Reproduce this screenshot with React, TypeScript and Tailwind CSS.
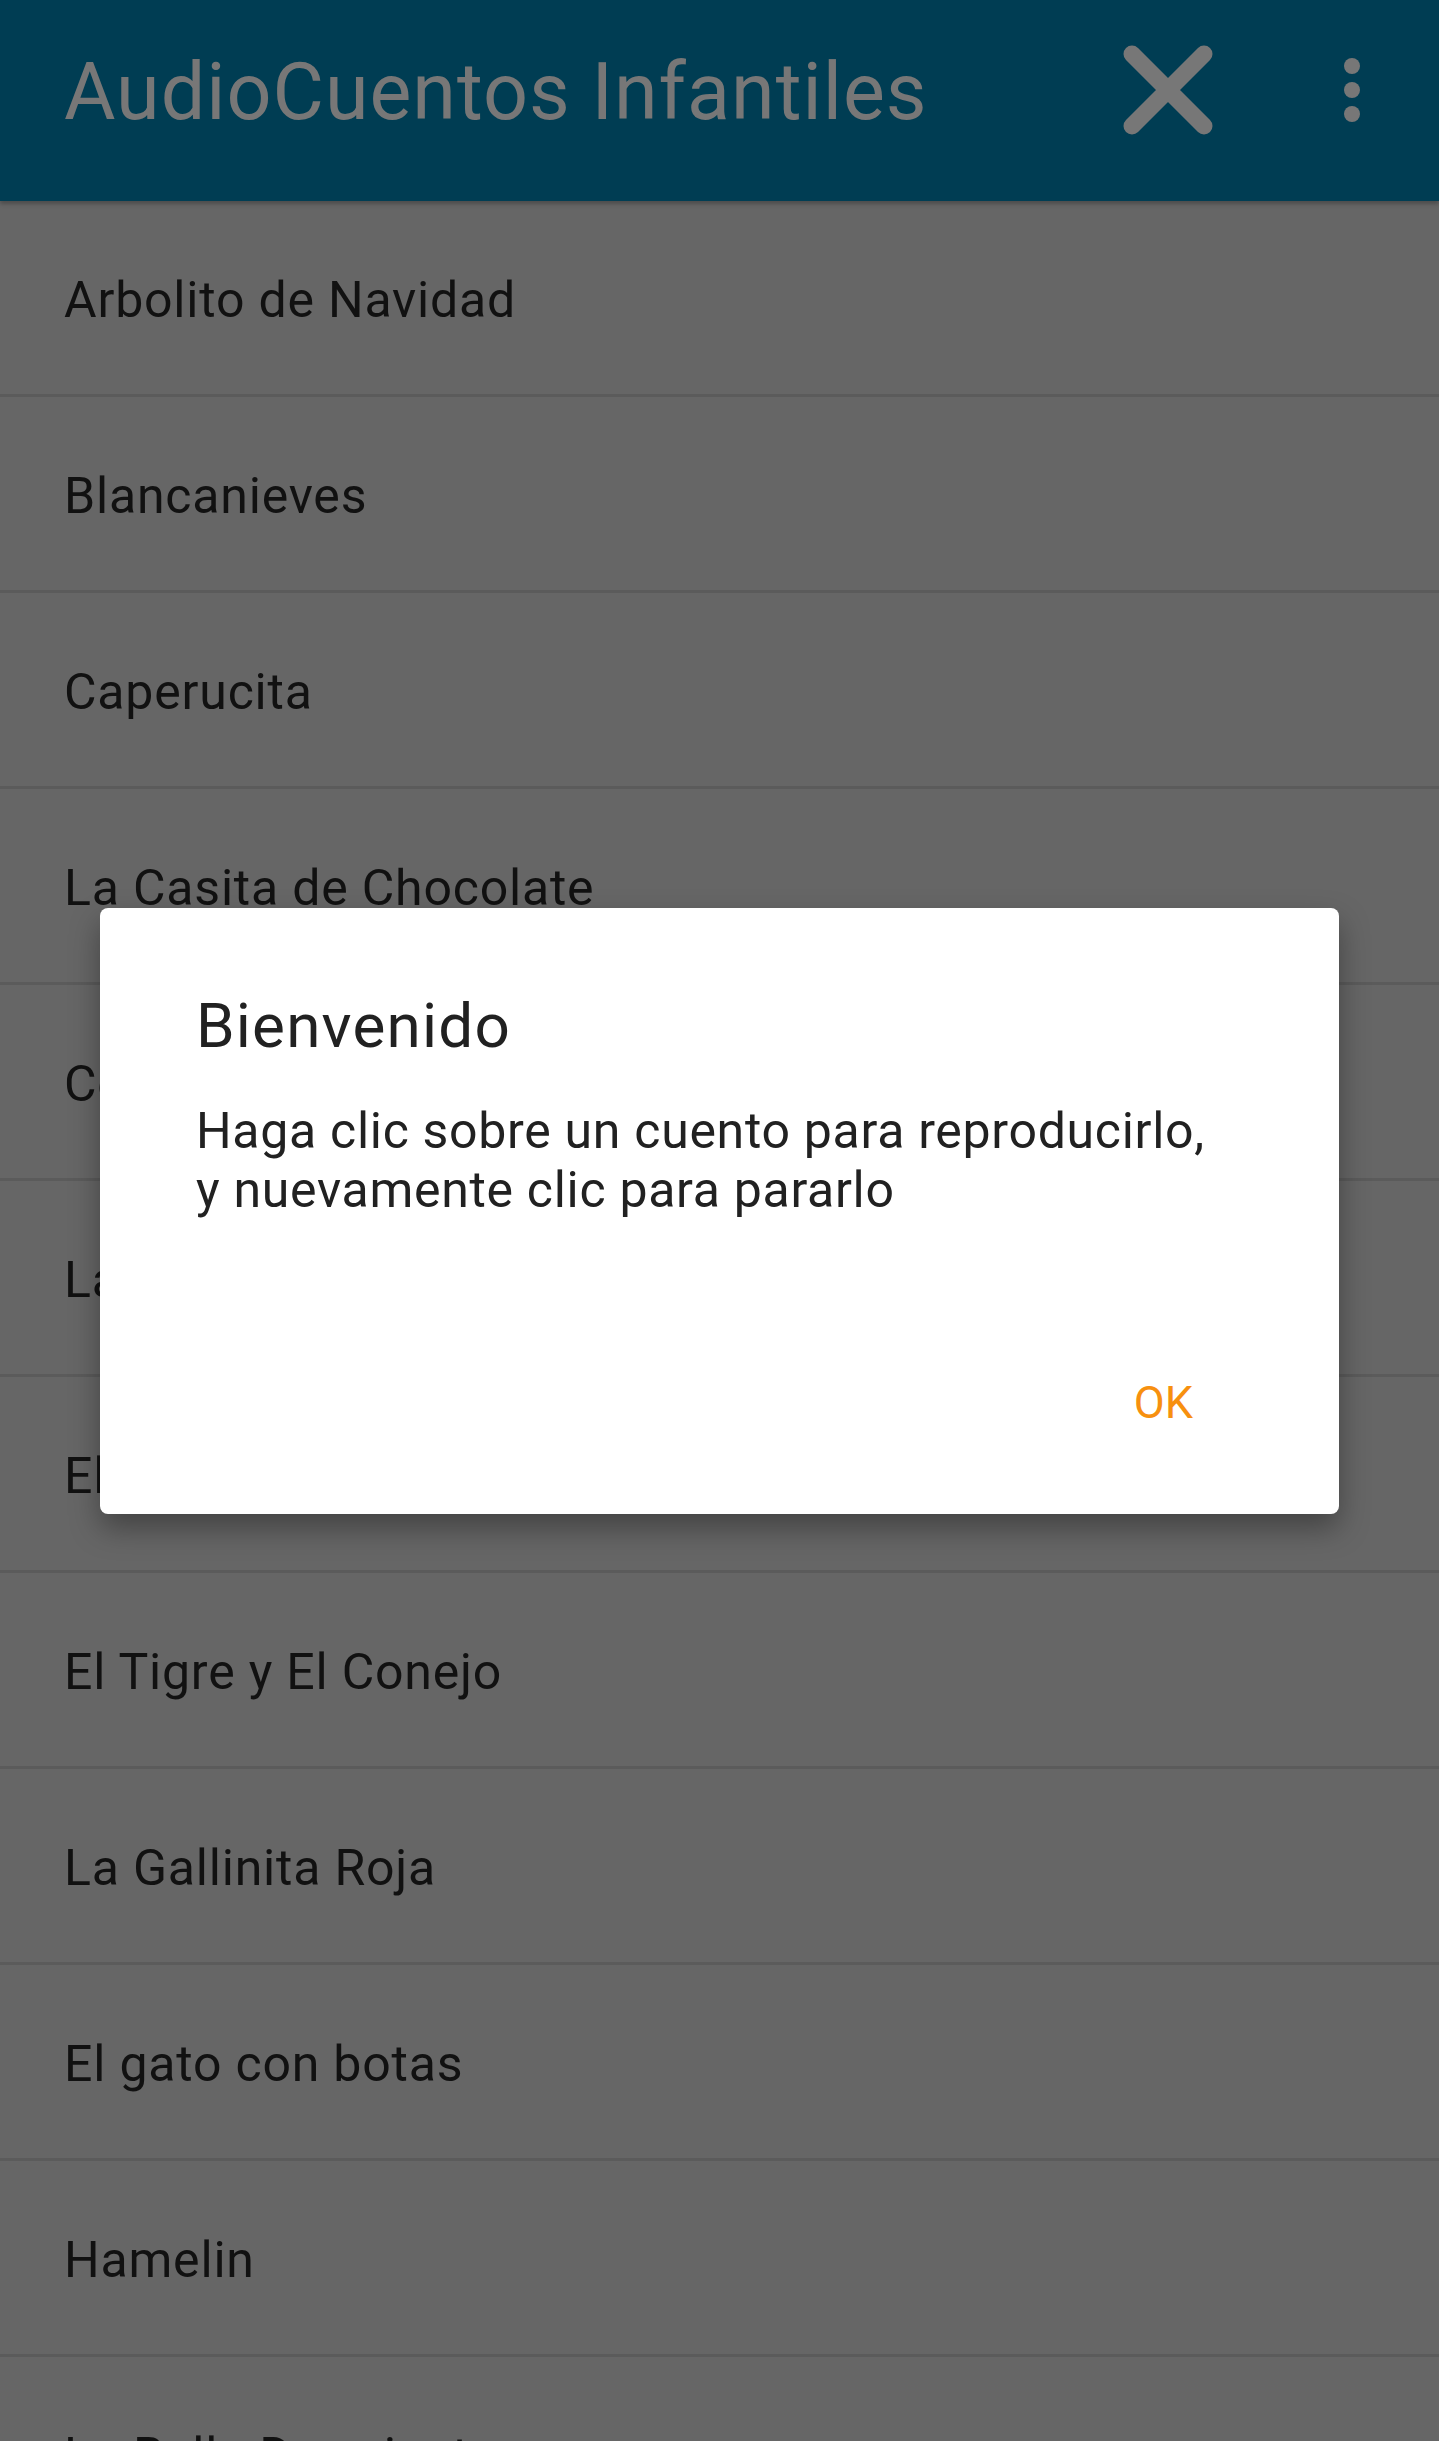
import React from "react";

const cuentos = [
	"Arbolito de Navidad",
	"Blancanieves",
	"Caperucita",
	"La Casita de Chocolate",
	"Cenicienta",
	"La Ratita Presumida",
	"El Patito Feo",
	"El Tigre y El Conejo",
	"La Gallinita Roja",
	"El gato con botas",
	"Hamelin",
	"La Bella Durmiente",
];

const font = { fontFamily: "Roboto, 'Noto Sans', sans-serif" };

const CloseIcon: React.FC = () => (
	<svg width="90" height="90" viewBox="0 0 90 90" className="shrink-0">
		<path d="M9 9 L81 81 M81 9 L9 81" stroke="#777777" strokeWidth="17" strokeLinecap="round" fill="none" />
	</svg>
);

const MenuDots: React.FC = () => (
	<div className="flex flex-col gap-[8px] shrink-0">
		<div className="w-[16px] h-[16px] rounded-full bg-[#777777]"></div>
		<div className="w-[16px] h-[16px] rounded-full bg-[#777777]"></div>
		<div className="w-[16px] h-[16px] rounded-full bg-[#777777]"></div>
	</div>
);

const App: React.FC = () => {
	return (
		<div className="relative w-[1439px] h-[2441px] overflow-hidden bg-[#666666]" style={font}>
			{/* HEADER */}
			<header className="relative z-10 h-[201px] bg-[#003d53] flex items-center pl-[64px] pr-[79px] pb-[22px] shadow-[0_3px_4px_rgba(0,0,0,0.25)]">
				<h1 className="flex-1 mt-[6px] text-[79px] leading-none text-[#777777] tracking-[1px] font-normal">
					AudioCuentos Infantiles
				</h1>
				<CloseIcon />
				<div className="ml-[131px]">
					<MenuDots />
				</div>
			</header>

			{/* LIST */}
			<ul>
				{cuentos.map((c) => (
					<li
						key={c}
						className="h-[196px] border-b-[3px] border-[#5b5b5b] flex items-center pl-[64px] pt-[4px] text-[50px] leading-none text-[#111111] tracking-[0.8px]"
					>
						{c}
					</li>
				))}
			</ul>

			{/* DIALOG */}
			<div className="absolute left-[100px] top-[908px] w-[1239px] h-[606px] bg-white rounded-[8px] shadow-[0_14px_30px_rgba(0,0,0,0.35)] flex flex-col">
				<h2 className="pt-[88px] pl-[96px] text-[62px] leading-[60px] text-[#212121] font-normal tracking-[1.2px]">
					Bienvenido
				</h2>
				<p className="mt-[46px] pl-[96px] pr-[40px] text-[50px] leading-[59px] text-[#212121] tracking-[0.7px]">
					Haga clic sobre un cuento para reproducirlo,
					<br />
					y nuevamente clic para pararlo
				</p>
				<div className="flex-1"></div>
				<div className="flex justify-end pr-[146px] pb-[86px]">
					<button className="text-[45px] leading-[50px] text-[#f7900f]">OK</button>
				</div>
			</div>
		</div>
	);
};

export default App;
